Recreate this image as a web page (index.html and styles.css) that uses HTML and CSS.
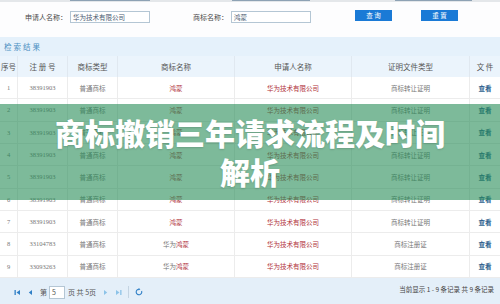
FILE: index.html
```html
<!DOCTYPE html>
<html lang="zh-CN">
<head>
    <meta charset="UTF-8">
    <meta name="viewport" content="width=device-width, initial-scale=1.0">
    <title>商标撤销三年请求流程及时间解析</title>
    <link rel="stylesheet" href="styles.css">
</head>
<body>
    <div class="page">
        <div class="top-strip">
            <span class="seg seg-1"></span>
            <span class="seg seg-2"></span>
            <span class="seg seg-3"></span>
        </div>

        <div class="search-form">
            <label class="field-label">申请人名称：</label>
            <div class="field-input">华为技术有限公司</div>
            <label class="field-label label-2">商标名称：</label>
            <div class="field-input">鸿蒙</div>
            <button class="btn btn-query">查 询</button>
            <button class="btn btn-reset">重 置</button>
        </div>

        <div class="result-title">检索结果</div>

        <div class="table-head">
            <span class="c c1">序号</span>
            <span class="c c2">注 册 号</span>
            <span class="c c3">商标类型</span>
            <span class="c c4">商标名称</span>
            <span class="c c5">申请人名称</span>
            <span class="c c6">证明文件类型</span>
            <span class="c c7">文 件</span>
        </div>

        <div class="table-body">
            <div class="row"><span class="c c1">1</span><span class="c c2">38391903</span><span class="c c3">普通商标</span><span class="c c4 red">鸿蒙</span><span class="c c5 red">华为技术有限公司</span><span class="c c6">商标转让证明</span><span class="c c7 link">查看</span></div>
            <div class="row"><span class="c c1">2</span><span class="c c2">38391903</span><span class="c c3">普通商标</span><span class="c c4 red">鸿蒙</span><span class="c c5 red">华为技术有限公司</span><span class="c c6">商标转让证明</span><span class="c c7 link">查看</span></div>
            <div class="row"><span class="c c1">3</span><span class="c c2">38391903</span><span class="c c3">普通商标</span><span class="c c4 red">鸿蒙</span><span class="c c5 red">华为技术有限公司</span><span class="c c6">商标转让证明</span><span class="c c7 link">查看</span></div>
            <div class="row"><span class="c c1">4</span><span class="c c2">38391903</span><span class="c c3">普通商标</span><span class="c c4 red">鸿蒙</span><span class="c c5 red">华为技术有限公司</span><span class="c c6">商标转让证明</span><span class="c c7 link">查看</span></div>
            <div class="row"><span class="c c1">5</span><span class="c c2">38391903</span><span class="c c3">普通商标</span><span class="c c4 red">鸿蒙</span><span class="c c5 red">华为技术有限公司</span><span class="c c6">商标转让证明</span><span class="c c7 link">查看</span></div>
            <div class="row"><span class="c c1">6</span><span class="c c2">38391903</span><span class="c c3">普通商标</span><span class="c c4 red">鸿蒙</span><span class="c c5 red">华为技术有限公司</span><span class="c c6">商标转让证明</span><span class="c c7 link">查看</span></div>
            <div class="row"><span class="c c1">7</span><span class="c c2">38391903</span><span class="c c3">普通商标</span><span class="c c4 red">鸿蒙</span><span class="c c5 red">华为技术有限公司</span><span class="c c6">商标转让证明</span><span class="c c7 link">查看</span></div>
            <div class="row"><span class="c c1">8</span><span class="c c2">33104783</span><span class="c c3">普通商标</span><span class="c c4">华为<em class="red">鸿蒙</em></span><span class="c c5 red">华为技术有限公司</span><span class="c c6">商标注册证</span><span class="c c7 link">查看</span></div>
            <div class="row"><span class="c c1">9</span><span class="c c2">33093263</span><span class="c c3">普通商标</span><span class="c c4">华为<em class="red">鸿蒙</em></span><span class="c c5 red">华为技术有限公司</span><span class="c c6">商标注册证</span><span class="c c7 link">查看</span></div>
        </div>

        <div class="pager">
            <div class="pager-left">
                <svg class="pg-icon" width="7" height="7" viewBox="0 0 7 7"><rect x="0.5" y="1" width="1.3" height="5" fill="#2f7fc6"/><path d="M6 1 L2.5 3.5 L6 6 Z" fill="#2f7fc6"/></svg>
                <svg class="pg-icon" width="7" height="7" viewBox="0 0 7 7"><path d="M5 1 L1.8 3.5 L5 6 Z" fill="#2f7fc6"/></svg>
                <span class="pg-text">第</span>
                <span class="pg-input">5</span>
                <span class="pg-text">页 共 5页</span>
                <svg class="pg-icon next" width="7" height="7" viewBox="0 0 7 7"><path d="M2 1 L5.2 3.5 L2 6 Z" fill="#8cc3e8"/></svg>
                <svg class="pg-icon" width="7" height="7" viewBox="0 0 7 7"><path d="M1 1 L4.5 3.5 L1 6 Z" fill="#8cc3e8"/><rect x="5.2" y="1" width="1.3" height="5" fill="#8cc3e8"/></svg>
                <span class="pg-sep"></span>
                <svg class="pg-icon" width="8" height="8" viewBox="0 0 8 8"><path d="M4 1.2 A2.8 2.8 0 1 0 6.6 3" fill="none" stroke="#2f7fc6" stroke-width="1.1"/><path d="M3.6 0 L5.4 1.3 L3.6 2.5 Z" fill="#2f7fc6"/></svg>
            </div>
            <div class="pager-info">当前显示 1 - 9 条记录 共 9 条记录</div>
        </div>

        <div class="cover">
            <h1 class="cover-title">商标撤销三年请求流程及时间<br>解析</h1>
        </div>
    </div>
</body>
</html>
```

FILE: styles.css
```css
* {
    margin: 0;
    padding: 0;
    box-sizing: border-box;
}
html {
    overflow: hidden;
}
body {
    width: 500px;
    height: 304px;
    overflow: hidden;
    background: #fdfdfe;
    font-family: "Noto Sans CJK SC", sans-serif;
    color: #555;
}
.page {
    position: relative;
    width: 500px;
    height: 304px;
    overflow: hidden;
}
.top-strip {
    display: flex;
    height: 2px;
    background: #e4e7ea;
}
.seg {
    height: 1px;
    background: #8ea2b4;
}
.seg-1 {
    margin-left: 70px;
    width: 80px;
}
.seg-2 {
    margin-left: 82px;
    width: 78px;
}
.seg-3 {
    margin-left: 85px;
    width: 77px;
}
.search-form {
    display: flex;
    align-items: center;
    height: 30px;
    margin-bottom: 5px;
    padding-left: 25px;
    font-size: 7px;
}
.field-label {
    color: #4a4a4a;
    line-height: 12px;
}
.label-2 {
    margin-left: 43px;
}
.field-input {
    width: 80px;
    height: 12px;
    margin-left: 3px;
    padding-left: 2px;
    border: 1px solid #b4c6d4;
    background: #fff;
    color: #4a5a70;
    font-size: 6.5px;
    line-height: 10px;
}
.btn {
    width: 37px;
    height: 11px;
    margin-top: -3px;
    border: none;
    background: #1a7ad6;
    color: #fff;
    font-family: "Noto Sans CJK SC", sans-serif;
    font-size: 6.5px;
    line-height: 11px;
}
.btn-query {
    margin-left: 44px;
}
.btn-reset {
    margin-left: 29px;
}
.result-title {
    height: 19px;
    padding-left: 4px;
    background: #e5f1fb;
    color: #4d90c2;
    font-size: 7.5px;
    letter-spacing: 2px;
    line-height: 19px;
}

/* table built from flex rows */
.table-head,
.row {
    display: flex;
}
.c {
    display: flex;
    align-items: center;
    justify-content: center;
    border-right: 1px solid #ececec;
}
.c1 { width: 18px; }
.c2 { width: 50px; }
.c3 { width: 50px; }
.c4 { width: 117px; }
.c5 { width: 117px; }
.c6 { width: 118px; }
.c7 { width: 30px; border-right: none; }
.table-head {
    height: 21px;
    background: #ebf4fc;
    color: #555;
    font-size: 7.5px;
}
.table-head .c {
    border-right-color: #e0e8f0;
}
.table-head .c7 {
    border-right: none;
}
.table-body {
    display: grid;
    grid-template-rows: repeat(9, 1fr);
    height: 201px;
    background: #fff;
}
.row {
    border-bottom: 1px solid #ececec;
    color: #777;
    font-family: "Liberation Serif", "Noto Sans CJK SC", serif;
    font-size: 6.5px;
}
.row .red,
.row em {
    color: #b0303a;
    font-style: normal;
    font-family: "Noto Sans CJK SC", sans-serif;
}
.row .c4 {
    font-family: "Noto Sans CJK SC", sans-serif;
}
.row .c3,
.row .c6 {
    font-family: "Noto Sans CJK SC", sans-serif;
}
.row .link {
    color: #2d5f8e;
    font-weight: bold;
    font-family: "Noto Sans CJK SC", sans-serif;
}
.pager {
    display: flex;
    align-items: center;
    justify-content: space-between;
    height: 26px;
    padding: 2px 6px 0 14px;
    background: #e4eff9;
    font-size: 7px;
    color: #555;
}
.pager-left {
    display: flex;
    align-items: center;
}
.pg-icon {
    display: block;
    margin-right: 6px;
}
.pg-icon.next {
    margin-left: 4px;
}
.pg-text {
    margin-right: 2px;
}
.pg-input {
    width: 16px;
    height: 13px;
    margin-right: 3px;
    padding-left: 2px;
    border: 1px solid #b4c6d4;
    background: #fff;
    line-height: 11px;
}
.pg-sep {
    width: 1px;
    height: 12px;
    margin-right: 6px;
    background: #c4d4e2;
}
.pager-info {
    margin-top: -6px;
    font-size: 6.5px;
    color: #444;
}
.cover {
    position: absolute;
    left: 0;
    top: 104px;
    width: 500px;
    height: 96px;
    display: flex;
    align-items: center;
    justify-content: center;
    background: rgba(38, 140, 87, 0.6);
}
.cover-title {
    color: #fff;
    font-size: 30px;
    font-weight: 900;
    line-height: 39px;
    text-align: center;
    text-shadow: 0 1px 2px rgba(0, 0, 0, 0.15);
}
```
